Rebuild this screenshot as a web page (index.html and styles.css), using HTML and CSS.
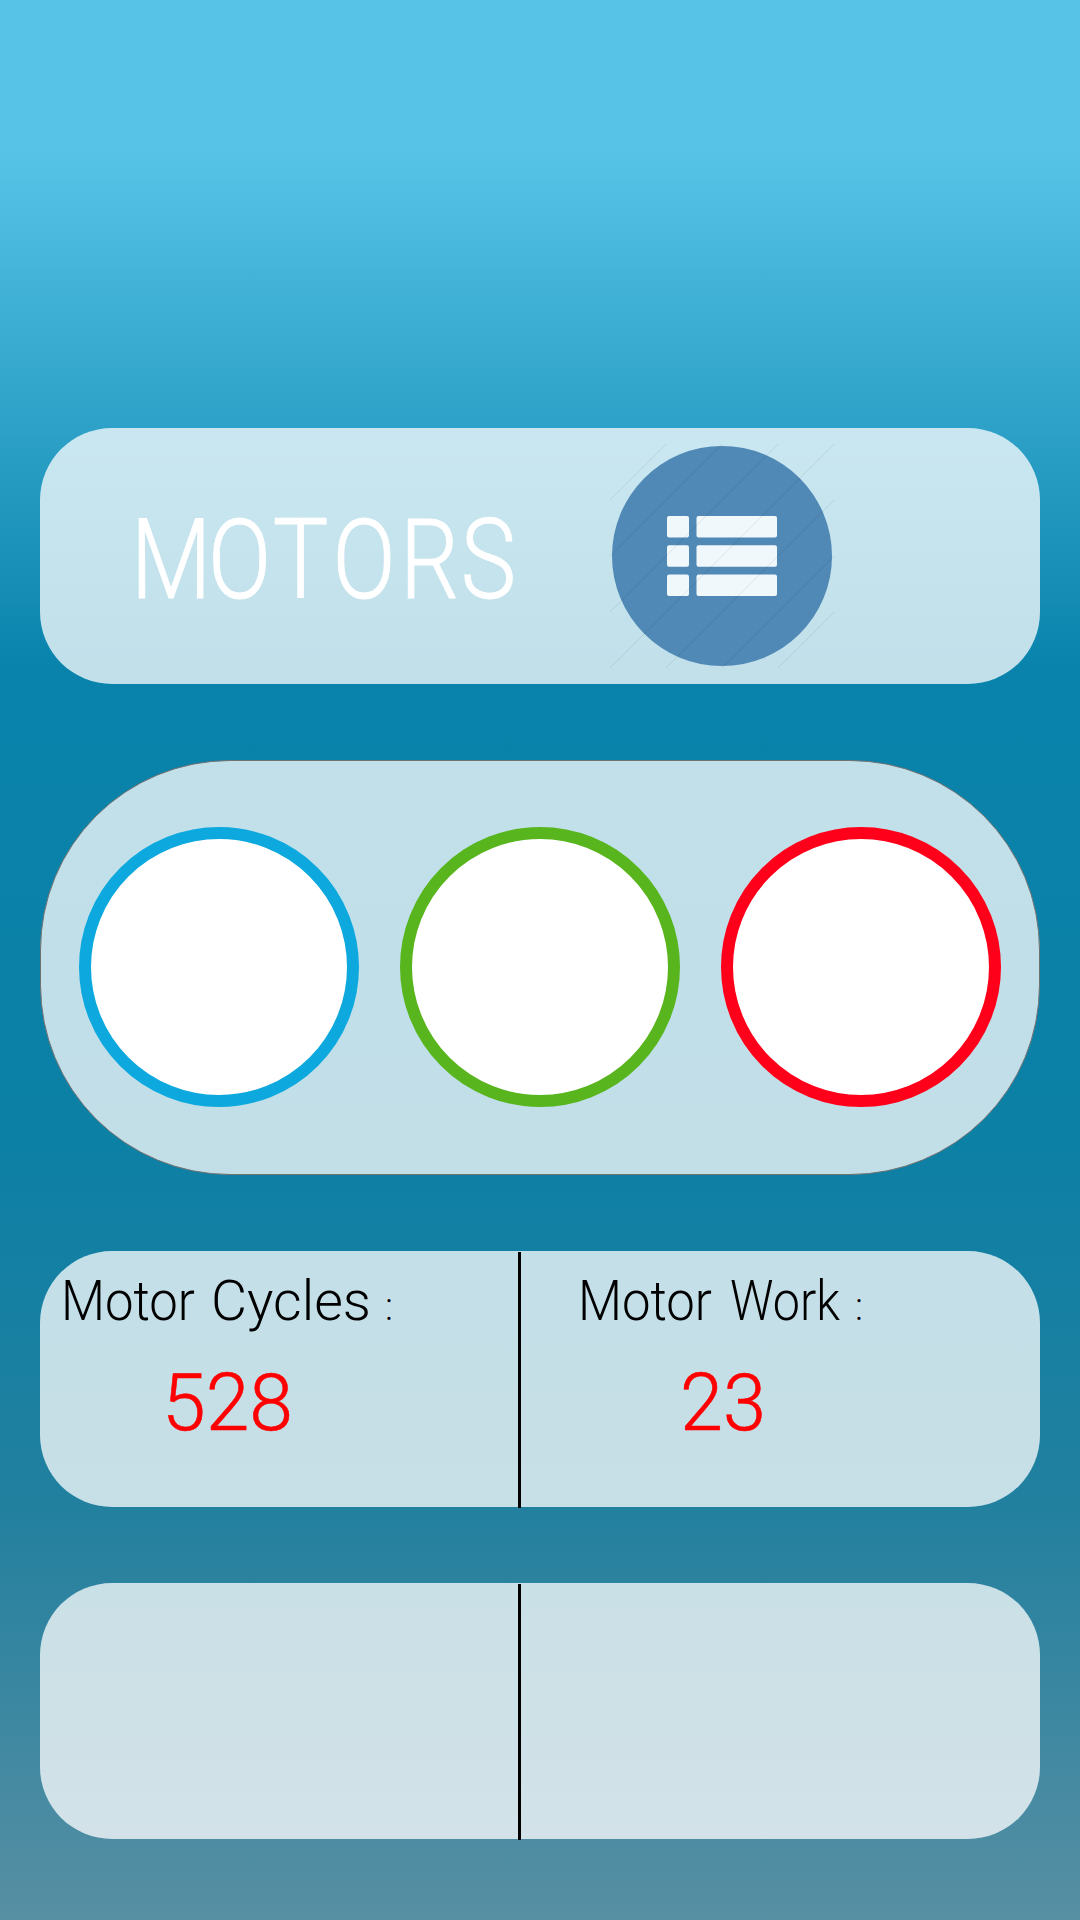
FILE: index.html
```html
<!DOCTYPE html>
<html lang="en">
<head>
<meta charset="utf-8">
<title>Motors</title>
<link rel="stylesheet" href="styles.css">
</head>
<body>
<main class="screen">
  <header class="card title-card">
    <svg class="title" width="372" height="100" viewBox="0 0 372 100"><text class="title-text" transform="scale(.84 1)" x="35.700 117.300 189.900 265.500 343.500 413.700" y="90">MOTORS</text></svg>
    <svg class="list-icon" width="224" height="224" viewBox="0 0 224 224">
      <circle cx="112" cy="112" r="110" fill="#5088b6"/>
      <g fill="#f0f8fb">
        <rect x="57" y="72" width="22" height="21.500" rx="2"/><rect x="86.500" y="72" width="80.500" height="21.500" rx="2"/>
        <rect x="57" y="101.200" width="22" height="21.500" rx="2"/><rect x="86.500" y="101.200" width="80.500" height="21.500" rx="2"/>
        <rect x="57" y="130.500" width="22" height="21.500" rx="2"/><rect x="86.500" y="130.500" width="80.500" height="21.500" rx="2"/>
      </g>
      <path d="M0 56 56 0M0 112 112 0M0 168 168 0M0 224 224 0M56 224 224 56M112 224 224 112M168 224 224 168" stroke="#000" stroke-opacity=".08"/>
    </svg>
  </header>

  <section class="card lights">
    <div class="light blue"></div>
    <div class="light green"></div>
    <div class="light red"></div>
  </section>

  <section class="card stats">
    <div class="stat cycles">
      <svg class="label" width="340" height="60" viewBox="0 0 340 60">
        <text class="label-text" x="-4" y="46" textLength="134" lengthAdjust="spacingAndGlyphs">Motor</text>
        <text class="label-text" x="146" y="46" textLength="160" lengthAdjust="spacingAndGlyphs">Cycles</text>
        <text class="label-text colon" x="320" y="46">:</text>
      </svg>
      <svg class="value" width="126" height="70" viewBox="0 0 126 70"><text class="value-text" x="-5" y="63" textLength="131" lengthAdjust="spacingAndGlyphs">528</text></svg>
    </div>
    <div class="divider"></div>
    <div class="stat work">
      <svg class="label" width="290" height="60" viewBox="0 0 290 60">
        <text class="label-text" x="-3" y="46" textLength="134" lengthAdjust="spacingAndGlyphs">Motor</text>
        <text class="label-text" x="149" y="46" textLength="110" lengthAdjust="spacingAndGlyphs">Work</text>
        <text class="label-text colon" x="274" y="46">:</text>
      </svg>
      <svg class="value" width="84" height="70" viewBox="0 0 84 70"><text class="value-text" x="-4" y="63" textLength="86" lengthAdjust="spacingAndGlyphs">23</text></svg>
    </div>
  </section>

  <section class="card stats">
    <div class="stat"></div>
    <div class="divider"></div>
    <div class="stat"></div>
  </section>
</main>
</body>
</html>
```
FILE: styles.css
```css
* {
  box-sizing: border-box;
}

body {
  margin: 0;
}

.screen {
  display: flex;
  flex-direction: column;
  gap: 76px;
  width: 1080px;
  height: 1920px;
  padding: 428px 40px 0;
  background: linear-gradient(#57c4e7 0, #57c4e7 145px, #0983ac 670px, #0c80a5 1130px, #22809f 1505px, #578fa3 1920px);
  font-family: Roboto, "Liberation Sans", sans-serif;
  font-weight: 300;
}

.card {
  flex: none;
  display: flex;
  height: 256px;
  border-radius: 72px;
  background: rgba(255, 255, 255, 0.75);
}

svg {
  display: block;
  flex: none;
  overflow: visible;
}

.title-card {
  align-items: flex-start;
  gap: 97px;
  padding: 16px 0 0 101px;
}

.title {
  margin-top: 64px;
}

.title-text {
  font-size: 111px;
  text-anchor: middle;
  fill: #fff;
  stroke: #fff;
  stroke-width: 1px;
}

.lights {
  height: 415px;
  padding: 66px 0 0 38px;
  gap: 41px;
  border: 1px solid #707070;
  border-radius: 190px;
}

.light {
  width: 280px;
  height: 280px;
  border: 12px solid;
  border-radius: 50%;
  background: #fff;
}

.blue {
  border-color: #0da9de;
}

.green {
  border-color: #58b51e;
}

.red {
  border-color: #ff001a;
}

.divider {
  width: 3px;
  height: 256px;
  margin-top: 1px;
  background: #000;
}

.stat {
  width: 478px;
}

.cycles {
  padding: 23px 0 0 25px;
}

.work {
  padding: 23px 0 0 60px;
}

.value {
  margin: 33px 0 0 102px;
}

.work .value {
  margin-left: 103px;
}

.label-text {
  font-size: 55px;
  fill: #000;
}

.colon {
  font-size: 38px;
}

.value-text {
  font-size: 79px;
  fill: #f00;
  stroke: #f00;
  stroke-width: 0.6px;
}
```
